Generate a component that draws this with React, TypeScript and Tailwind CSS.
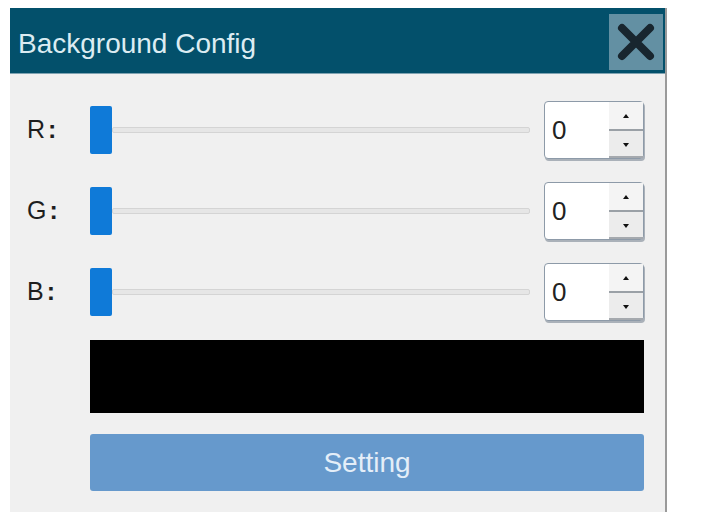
const rows = ["R", "G", "B"];

const Spin = () => (
  <div className="flex h-[58px] w-[100px] items-stretch rounded-[4px] border border-[#8d9aa8] bg-white shadow-[1px_2px_0_#aab1b9]">
    <div className="flex flex-1 items-center pl-[7px] text-[26px] text-[#222]">0</div>
    <div className="flex w-[34px] flex-col">
      <div className="flex flex-1 items-center justify-center border-b-2 border-[#9aa0a6] bg-[#f4f4f4]">
        <span className="h-0 w-0 border-x-[3px] border-b-[4px] border-x-transparent border-b-[#111]" />
      </div>
      <div className="flex flex-1 items-center justify-center bg-[#ececec] shadow-[inset_0_-2px_0_#a5a9ae]">
        <span className="h-0 w-0 border-x-[3px] border-t-[4px] border-x-transparent border-t-[#111]" />
      </div>
    </div>
  </div>
);

const Row = ({ label }: { label: string }) => (
  <div className="flex h-[58px] items-center">
    <div className="w-[63px] text-[25px] text-[#1e1e1e]">
      {label}
      <span className="ml-[3px] font-bold">:</span>
    </div>
    <div className="relative flex h-[48px] flex-1 items-center">
      <div className="ml-[22px] h-[6px] flex-1 rounded-[2px] border border-[#d4d4d4] bg-[#e6e6e6]" />
      <div className="absolute left-0 top-0 h-[48px] w-[22px] rounded-[2px] bg-[#0f7ad8]" />
    </div>
    <div className="ml-[14px]">
      <Spin />
    </div>
  </div>
);

export default function App() {
  return (
    <div className="h-[516px] w-[717px] bg-white pt-[8px] pl-[10px]" style={{ fontFamily: '"Liberation Sans", Arial, sans-serif' }}>
      <div className="w-[657px] border-r-2 border-[#9a9a9a]">
        <div className="relative flex h-[66px] items-center border-b border-[#7fa3b2] bg-[#03506b] pl-[8px] pt-[6px]">
          <span className="text-[28px] leading-none text-[#dcecf2]">Background Config</span>
          <div className="absolute right-[2px] top-[6px] flex h-[56px] w-[54px] items-center justify-center bg-[#6390a3]">
            <svg width="40" height="40" viewBox="0 0 40 40">
              <path d="M6 6 L34 34 M34 6 L6 34" stroke="#18262f" strokeWidth="8" strokeLinecap="round" />
            </svg>
          </div>
        </div>
        <div className="flex h-[438px] flex-col bg-[#f0f0f0] pl-[17px] pr-[21px] pt-[27px]">
          <div className="flex flex-col gap-[23px]">
            {rows.map((r) => (
              <Row key={r} label={r} />
            ))}
          </div>
          <div className="ml-[63px] mt-[19px] h-[73px] bg-black" />
          <div className="ml-[63px] mt-[21px] flex h-[57px] items-center justify-center rounded-[3px] bg-[#6699cc] text-[28px] text-[#e4eef8]">
            Setting
          </div>
        </div>
      </div>
    </div>
  );
}
